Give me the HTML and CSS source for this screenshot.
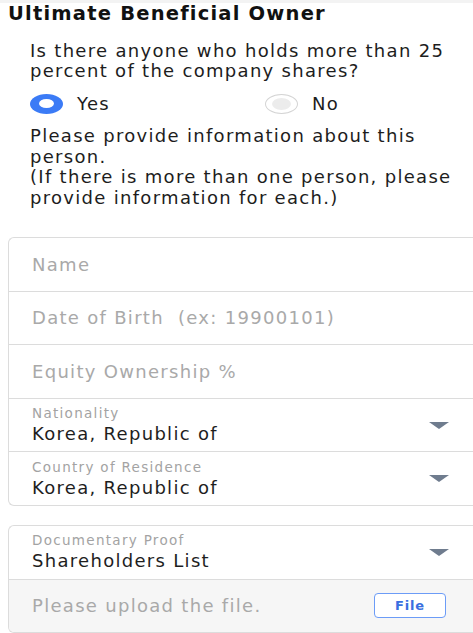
FILE: index.html
```html
<!DOCTYPE html>
<html lang="en">
<head>
  <meta charset="UTF-8">
  <meta name="viewport" content="width=device-width, initial-scale=1.0">
  <title>Ultimate Beneficial Owner</title>
  <link rel="stylesheet" href="styles.css">
</head>
<body>
  <div class="page">
    <h1>Ultimate Beneficial Owner</h1>
    <p class="question">Is there anyone who holds more than 25<br>percent of the company shares?</p>
    <div class="radios">
      <label class="radio-option">
        <span class="radio checked"></span>
        <span>Yes</span>
      </label>
      <label class="radio-option">
        <span class="radio"></span>
        <span>No</span>
      </label>
    </div>
    <p class="info">Please provide information about this<br>person.<br>(If there is more than one person, please<br>provide information for each.)</p>

    <div class="card">
      <div class="row"><span class="placeholder">Name</span></div>
      <div class="row"><span class="placeholder">Date of Birth&nbsp; (ex: 19900101)</span></div>
      <div class="row"><span class="placeholder">Equity Ownership %</span></div>
      <div class="row select">
        <div>
          <div class="select-label">Nationality</div>
          <div class="select-value">Korea, Republic of</div>
        </div>
        <span class="arrow"></span>
      </div>
      <div class="row select">
        <div>
          <div class="select-label">Country of Residence</div>
          <div class="select-value">Korea, Republic of</div>
        </div>
        <span class="arrow"></span>
      </div>
    </div>

    <div class="card second">
      <div class="row select">
        <div>
          <div class="select-label">Documentary Proof</div>
          <div class="select-value">Shareholders List</div>
        </div>
        <span class="arrow"></span>
      </div>
      <div class="row upload">
        <span class="placeholder">Please upload the file.</span>
        <button class="file-btn">File</button>
      </div>
    </div>
  </div>
</body>
</html>
```

FILE: styles.css
```css
body {
  margin: 0;
  padding: 0;
  font-family: "DejaVu Sans", "Liberation Sans", sans-serif;
  background-color: #fff;
  color: #1d1d1d;
  overflow: hidden;
}

.page {
  border-top: 3px solid #f3f3f3;
  padding-left: 8px;
}

h1 {
  margin: 0;
  font-size: 19.5px;
  line-height: 22px;
  letter-spacing: 1.2px;
  color: #111;
}

.question {
  margin: 16px 0 0 22px;
  font-size: 18px;
  line-height: 20px;
  letter-spacing: 1.3px;
}

.radios {
  display: flex;
  margin: 12px 0 0 22px;
}

.radio-option {
  display: flex;
  align-items: center;
  width: 235px;
  font-size: 18px;
  letter-spacing: 1.3px;
}

.radio-option:last-child {
  width: auto;
}

.radio {
  flex: 0 0 33px;
  height: 20px;
  box-sizing: border-box;
  border-radius: 50%;
  border: 1.5px solid #d4d4d4;
  margin-right: 14px;
  display: flex;
  align-items: center;
  justify-content: center;
}

.radio::after {
  content: "";
  width: 19px;
  height: 12px;
  border-radius: 50%;
  background-color: #ececec;
}

.radio.checked {
  border: none;
  background-color: #3b7bf6;
}

.radio.checked::after {
  width: 15px;
  height: 9px;
  background-color: #fff;
}

.info {
  margin: 12px 0 0 22px;
  font-size: 18px;
  line-height: 20.5px;
  letter-spacing: 1.3px;
}

.card {
  margin-top: 29px;
  border: 1px solid #dcdcdc;
  border-right: none;
  border-radius: 6px 0 0 6px;
  overflow: hidden;
}

.card.second {
  margin-top: 19px;
}

.row {
  height: 52.6px;
  display: flex;
  align-items: center;
  padding: 0 24px 0 23px;
  border-top: 1px solid #dcdcdc;
  font-size: 18px;
  letter-spacing: 1.3px;
}

.row:first-child {
  border-top: none;
}

.placeholder {
  color: #a9a9a9;
}

.select {
  justify-content: space-between;
}

.select-label {
  font-size: 13.5px;
  letter-spacing: 1.3px;
  color: #a3a3a3;
  line-height: 16px;
}

.select-value {
  color: #1e1e1e;
  line-height: 22px;
  margin-top: 2px;
}

.arrow {
  width: 0;
  height: 0;
  border-left: 10px solid transparent;
  border-right: 10px solid transparent;
  border-top: 7px solid #6f7c8e;
}

.upload {
  background-color: #f6f6f6;
  justify-content: space-between;
  padding-right: 27px;
}

.file-btn {
  width: 72px;
  height: 25px;
  border: 1.5px solid #6c9cf7;
  border-radius: 4px;
  background-color: #fff;
  color: #3a6fe0;
  font-family: "DejaVu Sans", "Liberation Sans", sans-serif;
  font-weight: bold;
  font-size: 13px;
  letter-spacing: 0.8px;
  padding: 0;
}
```
